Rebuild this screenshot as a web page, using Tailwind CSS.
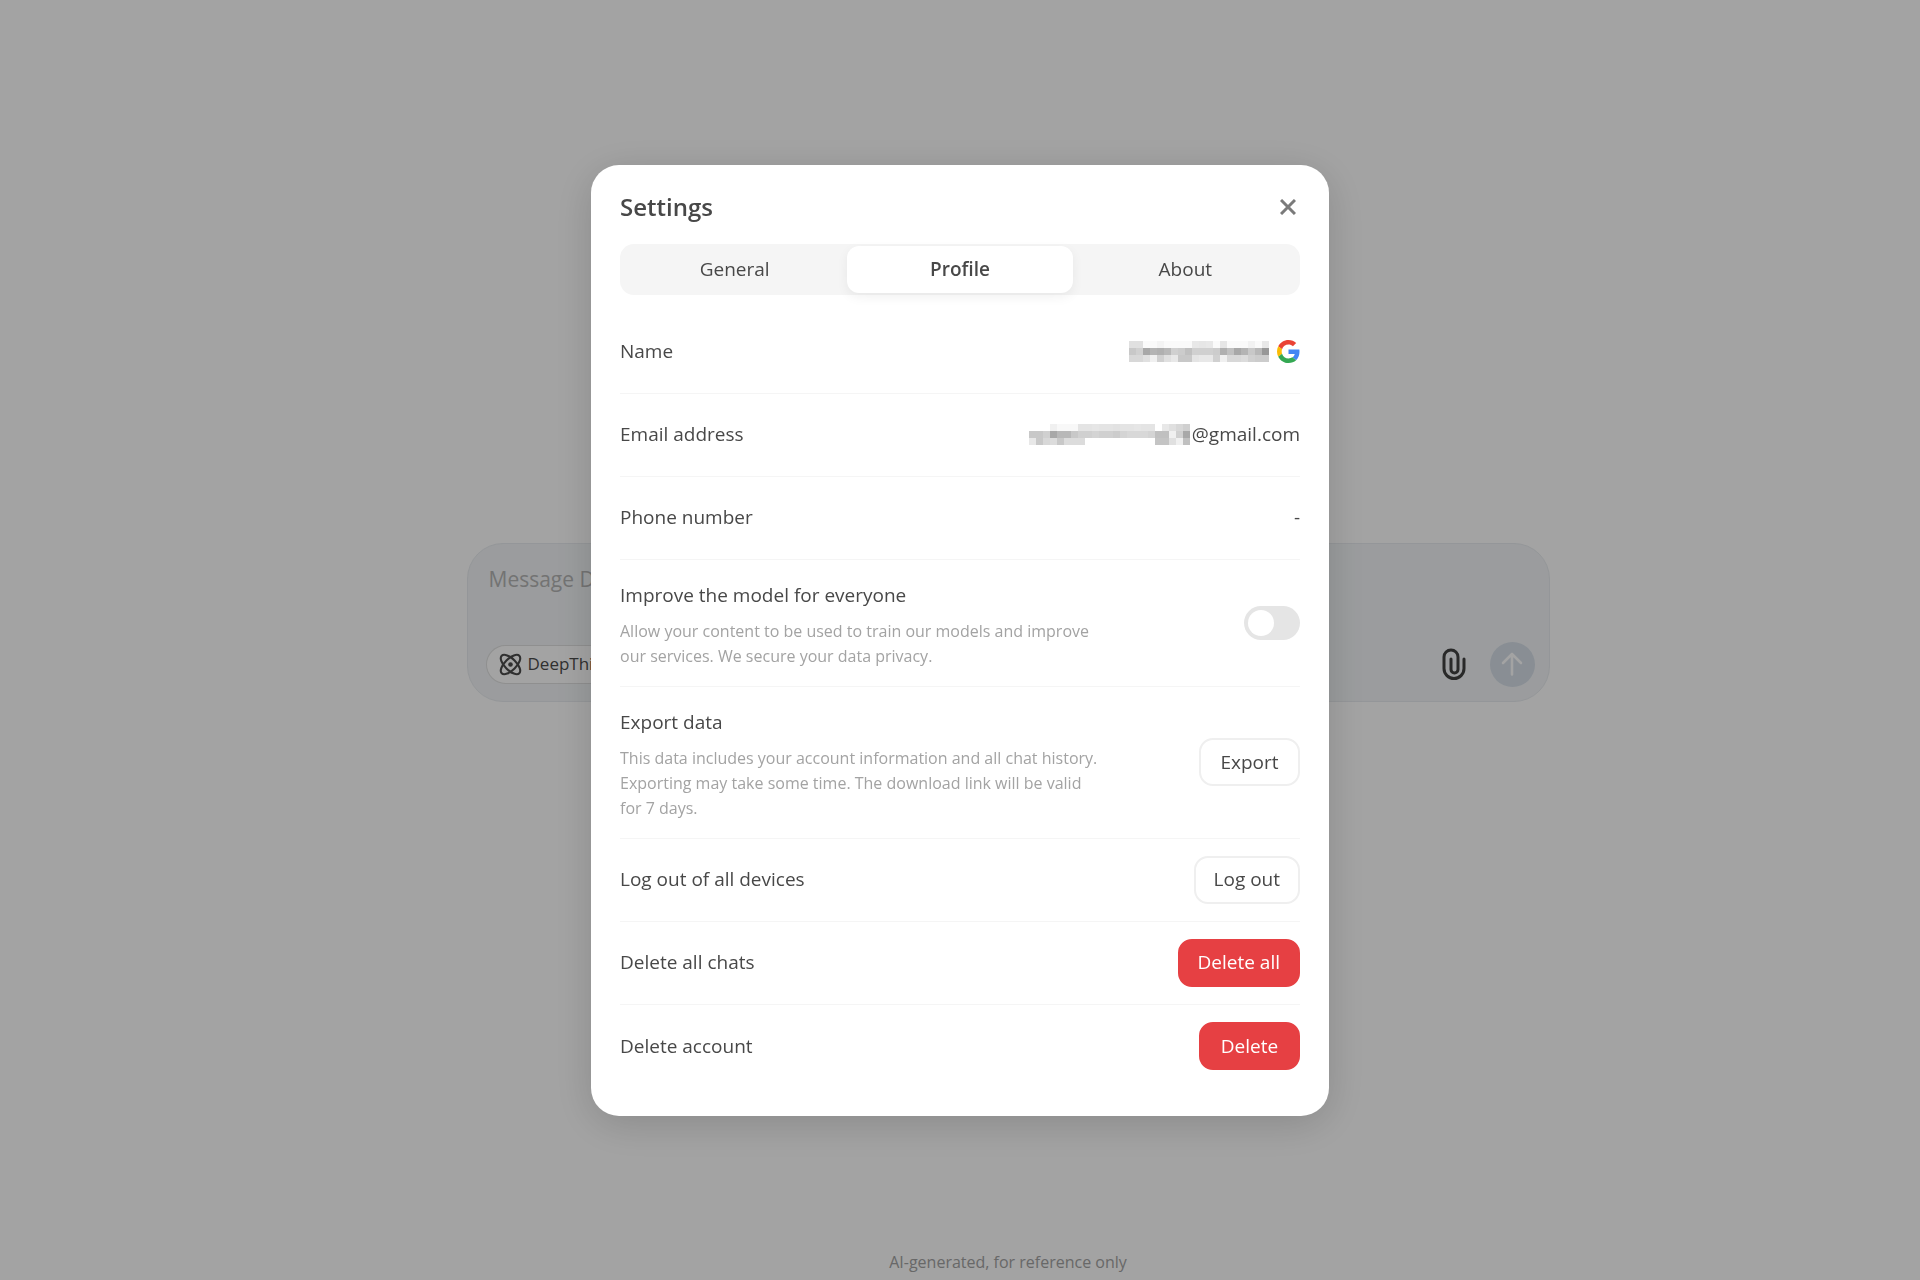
<!DOCTYPE html>
<html lang="en">
<head>
  <meta charset="UTF-8">
  <meta name="viewport" content="width=device-width, initial-scale=1.0">
  <title>Settings</title>
  <script src="https://cdn.jsdelivr.net/npm/@tailwindcss/browser@4"></script>
</head>
<body class="bg-white text-[#484848] font-['Open_Sans','Noto_Sans',sans-serif] text-[19px]">

  <!-- Chat page -->
  <main class="flex min-h-screen flex-col items-center pl-24">
    <div class="flex w-full flex-1 items-center justify-center">
      <form class="flex w-full max-w-[1083px] flex-col gap-[18px] rounded-[36px] border border-[#e8ebef] bg-[#f2f5f7] pt-5 pr-[14px] pb-[14px] pl-[18px]">
        <textarea rows="2" aria-label="Message" placeholder="Message DeepSeek" class="block w-full resize-none px-[3px] text-[21px] leading-[30px] outline-none placeholder:text-[#b4b4b4]"></textarea>
        <div class="flex items-center justify-between">
          <button type="button" class="flex h-[39px] items-center gap-[6px] rounded-full border border-black/12 bg-white px-3 text-[17px] text-[#4c4c4c]">
            <svg class="size-[23px]" viewBox="0 0 24 24" fill="none" stroke="currentColor" stroke-width="2.2">
              <ellipse cx="12" cy="12" rx="13" ry="6" transform="rotate(45 12 12)" />
              <ellipse cx="12" cy="12" rx="13" ry="6" transform="rotate(-45 12 12)" />
              <circle cx="12" cy="12" r="2.4" fill="currentColor" stroke="none" />
            </svg>
            DeepThink (R1)
          </button>
          <div class="flex items-center gap-6">
            <button type="button" aria-label="Attach file" class="text-[#404040]">
              <svg class="h-8 w-6" viewBox="0 0 24 32" fill="none" stroke="currentColor" stroke-width="3" stroke-linecap="round">
                <path d="M22 11v9.500a10 10 0 0 1-20 0V9a7 7 0 0 1 14 0v12.500a3.500 3.500 0 0 1-7 0V11" />
              </svg>
            </button>
            <button type="button" aria-label="Send" class="flex size-[45px] items-center justify-center rounded-full bg-[#d6dee8] text-white">
              <svg class="size-6" viewBox="0 0 24 24" fill="none" stroke="currentColor" stroke-width="2.600" stroke-linecap="round" stroke-linejoin="round">
                <path d="M12 22.500V2M3 11l9-9 9 9" />
              </svg>
            </button>
          </div>
        </div>
      </form>
    </div>
    <p class="text-[16px] leading-[36px] text-[#a3a3a3]">AI-generated, for reference only</p>
  </main>

  <!-- Settings dialog -->
  <div class="fixed inset-0 flex items-center justify-center bg-black/36">
    <section role="dialog" aria-labelledby="title" class="w-full max-w-[738px] rounded-[28px] bg-white px-[29px] pt-6 pb-7 shadow-[0_8px_40px_rgba(0,0,0,0.16)]">
      <header class="mb-[19px] flex h-9 items-center justify-between">
        <h1 id="title" class="text-[24px] font-semibold">Settings</h1>
        <button type="button" aria-label="Close" class="flex size-6 items-center justify-center text-[#7a7a7a]">
          <svg class="size-4" viewBox="0 0 16 16" fill="none" stroke="currentColor" stroke-width="3">
            <path d="M1 1l14 14M15 1L1 15" />
          </svg>
        </button>
      </header>

      <div role="tablist" class="mb-4 grid grid-cols-3 rounded-[14px] bg-[#f5f5f5] p-[2px]">
        <button role="tab" class="h-[47px] rounded-xl">General</button>
        <button role="tab" aria-selected="true" class="h-[47px] rounded-xl bg-white font-semibold shadow-[0_4px_12px_rgba(0,0,0,0.06)]">Profile</button>
        <button role="tab" class="h-[47px] rounded-xl">About</button>
      </div>

      <div class="divide-y divide-[#f5f5f5]">
        <div class="flex h-[83px] items-center justify-between">
          <span>Name</span>
          <span class="flex items-center gap-2">
            <svg id="name" width="140" height="21" shape-rendering="crispEdges"></svg>
            <svg class="size-[23px]" viewBox="0 0 48 48">
              <path fill="#EA4335" d="M24 9.500c3.540 0 6.710 1.220 9.210 3.600l6.850-6.850C35.900 2.380 30.470 0 24 0 14.620 0 6.510 5.380 2.560 13.220l7.980 6.190C12.430 13.720 17.740 9.500 24 9.500z" />
              <path fill="#4285F4" d="M46.980 24.550c0-1.570-.15-3.090-.38-4.550H24v9.020h12.940c-.58 2.960-2.260 5.480-4.780 7.180l7.730 6c4.510-4.180 7.090-10.360 7.090-17.650z" />
              <path fill="#FBBC05" d="M10.530 28.590c-.48-1.450-.76-2.990-.76-4.590s.27-3.140.76-4.590l-7.980-6.190C.92 16.460 0 20.120 0 24c0 3.880.92 7.540 2.560 10.780l7.970-6.190z" />
              <path fill="#34A853" d="M24 48c6.480 0 11.930-2.130 15.890-5.810l-7.730-6c-2.150 1.450-4.920 2.300-8.160 2.300-6.260 0-11.570-4.220-13.470-9.910l-7.980 6.190C6.510 42.620 14.620 48 24 48z" />
            </svg>
          </span>
        </div>

        <div class="flex h-[83px] items-center justify-between">
          <span>Email address</span>
          <span class="flex items-center gap-[2px]">
            <svg id="email" width="161" height="21" shape-rendering="crispEdges"></svg>
            @gmail.com
          </span>
        </div>

        <div class="flex h-[83px] items-center justify-between">
          <span>Phone number</span>
          <span>-</span>
        </div>

        <div class="flex items-center justify-between py-[17px]">
          <div class="max-w-[480px]">
            <label for="improve" class="mb-[6px] block leading-9">Improve the model for everyone</label>
            <p class="text-[16px] leading-[25px] text-[#a3a3a3]">Allow your content to be used to train our models and improve our services. We secure your data privacy.</p>
          </div>
          <input id="improve" type="checkbox" class="relative h-[34px] w-14 appearance-none rounded-full bg-[#e5e5e5] before:absolute before:top-1 before:left-1 before:size-[26px] before:rounded-full before:bg-white checked:bg-[#4d6bfe] checked:before:left-[26px]">
        </div>

        <div class="flex items-center justify-between py-[17px]">
          <div class="max-w-[480px]">
            <h2 class="mb-[6px] leading-9">Export data</h2>
            <p class="text-[16px] leading-[25px] text-[#a3a3a3]">This data includes your account information and all chat history. Exporting may take some time. The download link will be valid for 7 days.</p>
          </div>
          <button type="button" class="h-12 min-w-[101px] rounded-[14px] border-2 border-[#efefef] px-[18px]">Export</button>
        </div>

        <div class="flex h-[83px] items-center justify-between">
          <span>Log out of all devices</span>
          <button type="button" class="h-12 min-w-[101px] rounded-[14px] border-2 border-[#efefef] px-[18px]">Log out</button>
        </div>

        <div class="flex h-[83px] items-center justify-between">
          <span>Delete all chats</span>
          <button type="button" class="h-12 min-w-[101px] rounded-[14px] border-2 border-[#e64043] bg-[#e64043] px-[18px] text-white">Delete all</button>
        </div>

        <div class="flex h-[83px] items-center justify-between">
          <span>Delete account</span>
          <button type="button" class="h-12 min-w-[101px] rounded-[14px] border-2 border-[#e64043] bg-[#e64043] px-[18px] text-white">Delete</button>
        </div>
      </div>
    </section>
  </div>

  <script>
    // Mosaics over private data: one hex grey per cell, "--" is empty
    const cell = 7;
    const mosaics = {
      name: [
        "e0 e0 fa fa f4 fa fa fa fa e8 e6 e8 fa e6 fa fa fa f2 fa e8",
        "c8 d0 a8 b4 b0 b8 d0 cc c0 d0 d0 d0 cc b0 c0 a8 b4 c8 b8 98",
        "d8 d8 e0 f0 d0 e0 e8 c8 c8 e4 e8 e8 d0 f0 d8 d8 dc d0 cc cc",
      ],
      email: [
        "-- -- -- f0 f8 f8 f8 e4 e4 e6 e4 e4 e2 e4 e4 e6 e4 e4 -- e8 e0 d8 d0",
        "c8 c8 d0 a8 b8 b8 c8 d0 d0 d4 d0 d0 cc d4 d8 d8 d8 d4 c0 c0 f0 d0 a8",
        "e8 c8 d8 dc c8 dc dc dc -- -- -- -- -- -- -- -- -- -- c4 c4 e0 f0 c0",
      ],
    };

    for (const id in mosaics) {
      const svg = document.getElementById(id);
      mosaics[id].forEach((row, r) => {
        row.split(" ").forEach((grey, c) => {
          if (grey === "--") return;
          const rect = document.createElementNS("http://www.w3.org/2000/svg", "rect");
          rect.setAttribute("x", c * cell);
          rect.setAttribute("y", r * cell);
          rect.setAttribute("width", cell);
          rect.setAttribute("height", cell);
          rect.setAttribute("fill", "#" + grey + grey + grey);
          svg.appendChild(rect);
        });
      });
    }
  </script>
</body>
</html>
